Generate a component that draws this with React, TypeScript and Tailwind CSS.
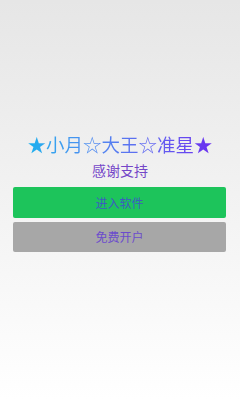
import React from "react";

export default function App() {
  return (
    <div
      className="w-[240px] h-[400px] bg-gradient-to-b from-[#e6e6e6] to-[#ffffff] flex flex-col items-center pt-[132px]"
      style={{ fontFamily: '"Noto Sans CJK SC", "Noto Sans", sans-serif' }}
    >
      <div className="text-[18.5px] leading-[24px] bg-gradient-to-r from-[#14b0ee] to-[#6a2cf0] bg-clip-text text-transparent">
        ★小月☆大王☆准星★
      </div>
      <div className="mt-[4px] text-[14px] leading-[20px] text-[#7446c8]">感谢支持</div>
      <div className="mt-[7px] w-[213px] ml-[-1px] flex flex-col gap-[4px]">
        <div className="h-[31px] rounded-[2px] bg-[#1dc45b] flex items-center justify-center text-[12px] text-[#3b5cc0]">
          进入软件
        </div>
        <div className="h-[30px] rounded-[2px] bg-[#a7a7a7] flex items-center justify-center text-[12px] text-[#6b4ccc]">
          免费开户
        </div>
      </div>
    </div>
  );
}
